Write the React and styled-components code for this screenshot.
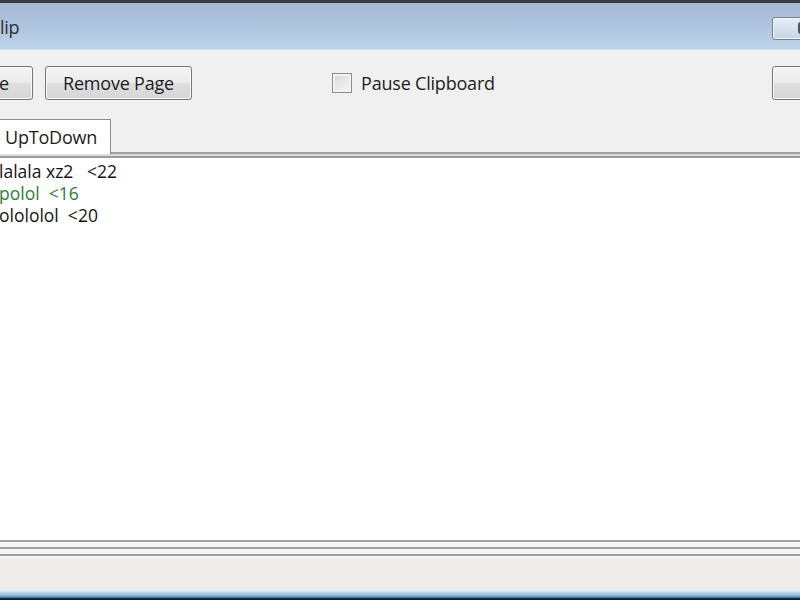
import React from "react";
import styled, { createGlobalStyle } from "styled-components";

const Global = createGlobalStyle`
  html, body { margin: 0; padding: 0; background: #f0f0f0; }
  body { font-family: "Open Sans", "Noto Sans", sans-serif; }
`;

const Window = styled.div`
  width: 800px;
  height: 600px;
  display: flex;
  flex-direction: column;
  overflow: hidden;
  background: #f0f0f0;
`;

const TopEdge = styled.div`
  height: 3px;
  background: #3a3d40;
  flex: none;
`;

const TitleBar = styled.div`
  height: 46px;
  flex: none;
  display: flex;
  align-items: center;
  justify-content: space-between;
  background: linear-gradient(to bottom, #a3b9d3 0%, #b2c8e1 60%, #bdd3ea 100%);
  border-bottom: 1px solid #d6e0ea;
`;

const Title = styled.div`
  font-size: 18px;
  color: #2b2f36;
  margin-left: 0;
  margin-top: 2px;
  letter-spacing: -0.3px;
`;

const TitleButton = styled.div`
  width: 34px;
  height: 23px;
  margin-right: -6px;
  margin-top: 4px;
  border: 1px solid #6d7e95;
  border-radius: 3px;
  background: linear-gradient(to bottom, #e7eef6, #c6d4e4);
  box-shadow: inset 0 0 0 1px #f4f8fc;
  display: flex;
  align-items: center;
  padding-left: 25px;
  box-sizing: border-box;
`;

const TitleGlyph = styled.span`
  width: 8px;
  height: 8px;
  border: 2px solid #46556a;
  border-radius: 3px;
  flex: none;
`;

const Toolbar = styled.div`
  height: 68px;
  flex: none;
  display: flex;
  align-items: flex-start;
  padding-top: 16px;
  box-sizing: border-box;
`;

const Button = styled.div`
  height: 34px;
  box-sizing: border-box;
  border: 1px solid #767676;
  border-radius: 3px;
  background: linear-gradient(to bottom, #f4f4f4 0%, #ececec 48%, #dedede 52%, #d6d6d6 100%);
  box-shadow: inset 0 0 0 1px #fbfbfb;
  display: flex;
  align-items: center;
  justify-content: ${(p) => (p.$end ? "flex-end" : "center")};
  font-size: 18px;
  color: #1c1c1c;
  padding: 0 ${(p) => p.$pad ?? 14}px 1px 0;
  margin-left: ${(p) => p.$ml || 0}px;
  margin-right: ${(p) => p.$mr || 0}px;
  width: ${(p) => (p.$w ? p.$w + "px" : "auto")};
  flex: none;
  letter-spacing: -0.2px;
`;

const CheckRow = styled.label`
  display: flex;
  align-items: center;
  margin-left: 140px;
  margin-top: 5px;
  font-size: 18px;
  color: #1c1c1c;
  gap: 9px;
  letter-spacing: -0.2px;
`;

const CheckBox = styled.span`
  width: 20px;
  height: 20px;
  box-sizing: border-box;
  border: 1px solid #8e8f8f;
  background: linear-gradient(135deg, #d8d8d8, #f6f6f6);
  box-shadow: inset 0 0 0 2px #f2f2f2;
`;

const Spacer = styled.div`
  flex: 1;
`;

const TabStrip = styled.div`
  height: 34px;
  flex: none;
  display: flex;
  align-items: flex-end;
  position: relative;
  border-bottom: 2px solid #a0a0a0;
  box-shadow: 0 2px 0 #dcdcdc, 0 4px 0 #9c9c9c;
  margin-bottom: 4px;
  z-index: 1;
`;

const Tab = styled.div`
  height: 35px;
  box-sizing: border-box;
  background: #ffffff;
  border: 1px solid #8c8c8c;
  border-bottom: none;
  margin-left: -2px;
  margin-bottom: -2px;
  padding: 0 13px 0 6px;
  display: flex;
  align-items: center;
  font-size: 18px;
  color: #1c1c1c;
  letter-spacing: -0.2px;
`;

const Content = styled.div`
  flex: 1;
  background: #ffffff;
  padding-top: 2px;
`;

const Line = styled.div`
  font-size: 17.5px;
  line-height: 22px;
  color: ${(p) => p.$color || "#141414"};
  white-space: pre;
  margin-left: -1px;
`;

const Splitter = styled.div`
  flex: none;
  height: 18px;
  box-sizing: border-box;
  background: #f6f6f6;
  border-top: 2px solid #a2a2a2;
  display: flex;
  flex-direction: column;
`;

const SplitLine = styled.div`
  height: 2px;
  background: #a0a0a0;
  margin-top: ${(p) => p.$mt}px;
`;

const StatusBar = styled.div`
  height: 32px;
  flex: none;
  background: #efedeb;
`;

const BottomEdge = styled.div`
  height: 10px;
  flex: none;
  background: linear-gradient(to bottom, #f4f8fb 0%, #c4dbee 20%, #8fb6d8 55%, #4e7c9c 75%, #0f2a36 85%, #0b1e26 100%);
`;

export default function App() {
  return (
    <>
      <Global />
      <Window>
        <TopEdge />
        <TitleBar>
          <Title>lip</Title>
          <TitleButton>
            <TitleGlyph />
          </TitleButton>
        </TitleBar>
        <Toolbar>
          <Button $end $pad={23} $w={46} $ml={-13}>e</Button>
          <Button $pad={0} $ml={12} $w={147}>Remove Page</Button>
          <CheckRow>
            <CheckBox />
            Pause Clipboard
          </CheckRow>
          <Spacer />
          <Button $w={60} $mr={-32} />
        </Toolbar>
        <TabStrip>
          <Tab>UpToDown</Tab>
        </TabStrip>
        <Content>
          <Line>{"lalala xz2   <22"}</Line>
          <Line $color="#2c7d3a">{"polol  <16"}</Line>
          <Line>{"olololol  <20"}</Line>
        </Content>
        <Splitter>
          <SplitLine $mt={5} />
          <SplitLine $mt={5} />
        </Splitter>
        <StatusBar />
        <BottomEdge />
      </Window>
    </>
  );
}
